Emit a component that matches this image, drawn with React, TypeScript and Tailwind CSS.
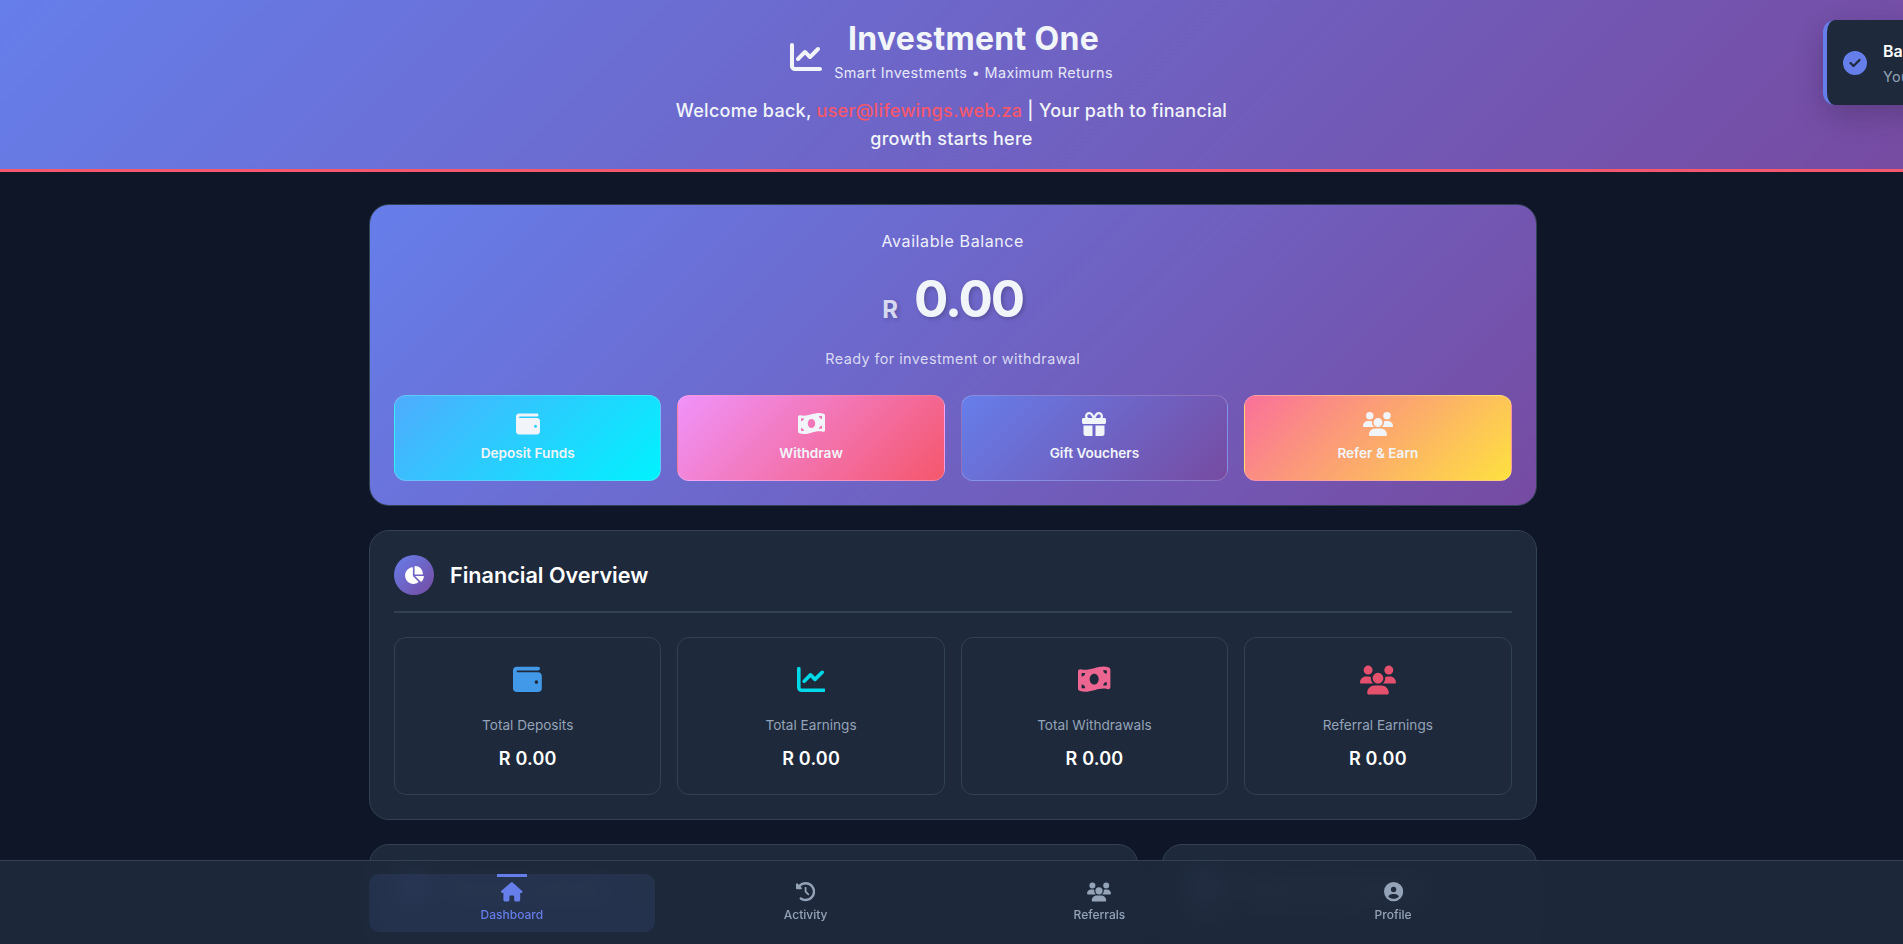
import React from "react";
import {
  FaChartLine,
  FaChartPie,
  FaCircleCheck,
  FaCircleUser,
  FaClockRotateLeft,
  FaGift,
  FaHouse,
  FaMoneyBillWave,
  FaUsers,
  FaWallet,
} from "react-icons/fa6";

const actions = [
  { label: "Deposit Funds", icon: <FaWallet className="text-[24px]" />, bg: "bg-[linear-gradient(135deg,#4facfe,#00f2fe)]" },
  { label: "Withdraw", icon: <FaMoneyBillWave className="text-[27px]" />, bg: "bg-[linear-gradient(135deg,#f093fb,#f5576c)]" },
  { label: "Gift Vouchers", icon: <FaGift className="text-[24px]" />, bg: "bg-[linear-gradient(135deg,#667eea,#764ba2)]" },
  { label: "Refer & Earn", icon: <FaUsers className="text-[30px]" />, bg: "bg-[linear-gradient(135deg,#fa709a,#fee140)]" },
];

const stats = [
  { label: "Total Deposits", icon: <FaWallet className="text-[28.8px] text-[#4299e8]" /> },
  { label: "Total Earnings", icon: <FaChartLine className="text-[28.8px] text-[#00d9e8]" /> },
  { label: "Total Withdrawals", icon: <FaMoneyBillWave className="text-[32.4px] text-[#ec6691]" /> },
  { label: "Referral Earnings", icon: <FaUsers className="text-[36px] text-[#e5506c]" /> },
];

const navItems = [
  { label: "Dashboard", icon: <FaHouse className="text-[21.6px]" />, active: true },
  { label: "Activity", icon: <FaClockRotateLeft className="text-[19.2px]" />, active: false },
  { label: "Referrals", icon: <FaUsers className="text-[24px]" />, active: false },
  { label: "Profile", icon: <FaCircleUser className="text-[19.2px]" />, active: false },
];

function SectionHeader({ title, icon }: { title: string; icon: React.ReactNode }) {
  return (
    <div className="flex items-center gap-4 border-b-2 border-[#334155] pb-4">
      <div className="flex h-10 w-10 items-center justify-center rounded-full bg-[linear-gradient(135deg,#667eea,#764ba2)] text-white">
        {icon}
      </div>
      <h2 className="text-[21.6px] font-semibold leading-[40px] text-white">{title}</h2>
    </div>
  );
}

export default function App() {
  return (
    <div className="relative h-[944px] overflow-hidden bg-[#0e1628] font-['Inter','Noto_Sans',sans-serif]">
      {/* Top header */}
      <header className="flex h-[172px] flex-col items-center border-b-[3px] border-[#f5576c] bg-[linear-gradient(135deg,#667eea,#764ba2)] pt-[16px] text-[#f1f5f9]">
        <div className="flex items-center gap-3">
          <FaChartLine className="mt-[14px] text-[32px]" />
          <div className="flex w-[279px] flex-col items-center">
            <h1 className="text-[32px] font-bold leading-[46px] tracking-[0.3px]">Investment One</h1>
            <p className="text-[14.4px] leading-[22px] tracking-[0.38px] text-[#e6e8f8]">
              Smart Investments • Maximum Returns
            </p>
          </div>
        </div>
        <p className="mt-[13px] w-[560px] text-center text-[18px] font-medium leading-[28px] tracking-[0.27px]">
          Welcome back, <span className="text-[#f5576c]">user@lifewings.web.za</span> | Your path to financial growth
          starts here
        </p>
      </header>

      {/* Main content */}
      <main className="ml-[369px] flex w-[1167.5px] flex-col gap-6 pt-[32px]">
        <section className="rounded-[20px] border border-[#334155] bg-[linear-gradient(135deg,#667eea,#764ba2)] p-6 text-center">
          <p className="text-[16px] leading-6 tracking-[0.6px] text-[#eef0fb]">Available Balance</p>
          <div className="mt-[8px] flex h-[76px] items-center justify-center gap-4 text-[#f1f5f9] [text-shadow:2px_2px_4px_rgba(0,0,0,0.2)]">
            <span className="mt-[21px] text-[24px] font-bold opacity-80">R</span>
            <span className="text-[51px] font-bold tracking-[-2px]">0.00</span>
          </div>
          <p className="mt-[10px] text-[14.4px] leading-[23px] tracking-[0.43px] text-[#d9d9f2]">
            Ready for investment or withdrawal
          </p>
          <div className="mt-[25px] grid grid-cols-4 gap-4">
            {actions.map((a) => (
              <button
                key={a.label}
                className={`flex h-[86px] flex-col items-center justify-center gap-[6px] rounded-xl border border-white/20 pb-[3px] text-[#f1f5f9] ${a.bg}`}
              >
                <div className="flex h-[26px] items-center justify-center">{a.icon}</div>
                <span className="text-[13.6px] font-semibold leading-5">{a.label}</span>
              </button>
            ))}
          </div>
        </section>

        <section className="rounded-[20px] border border-[#334155] bg-[#1e293b] p-6">
          <SectionHeader title="Financial Overview" icon={<FaChartPie className="text-[20px]" />} />
          <div className="mt-[24px] grid grid-cols-4 gap-4">
            {stats.map((s) => (
              <div key={s.label} className="flex h-[158px] flex-col items-center rounded-xl border border-[#334155] pt-[27px] text-center">
                <div className="flex h-[29px] items-center justify-center">{s.icon}</div>
                <p className="mt-[21px] text-[13.6px] leading-5 text-[#94a3b8]">{s.label}</p>
                <p className="mt-[12px] text-[18px] font-semibold leading-6 tracking-[0.2px] text-white">R 0.00</p>
              </div>
            ))}
          </div>
        </section>

        <div className="grid grid-cols-[769px_374.5px] gap-6">
          <section className="h-[300px] rounded-[20px] border border-[#334155] bg-[#1e293b] p-6">
            <SectionHeader title="Recent Activity" icon={<FaClockRotateLeft className="text-[19px]" />} />
          </section>
          <section className="h-[300px] rounded-[20px] border border-[#334155] bg-[#1e293b] p-6">
            <SectionHeader title="Referral Program" icon={<FaUsers className="text-[19px]" />} />
          </section>
        </div>
      </main>

      {/* Toast, sliding in past the right edge */}
      <div className="absolute left-[1823px] top-[20px] flex h-[85px] w-[340px] items-center gap-4 rounded-xl border-l-4 border-[#667eea] bg-[#1e293b] pl-4 shadow-[0_10px_30px_rgba(0,0,0,0.2)]">
        <FaCircleCheck className="shrink-0 text-[24px] text-[#667eea]" />
        <div>
          <p className="text-[16px] font-semibold leading-6 text-white">Balance Updated</p>
          <p className="mt-1 text-[14.4px] leading-5 tracking-[0.4px] text-[#94a3b8]">Your balance has been refreshed</p>
        </div>
      </div>

      {/* Bottom nav */}
      <nav className="absolute bottom-0 left-0 right-0 h-[84px] border-t border-[#334155] bg-[#1e293b]/95 backdrop-blur-md">
        <div className="ml-[369px] grid w-[1167px] grid-cols-4 gap-2 pt-[13px]">
          {navItems.map((n) => (
            <div
              key={n.label}
              className={`relative flex h-[58px] flex-col items-center rounded-[10px] pt-[8px] ${
                n.active ? "bg-[#667eea]/10 text-[#667eea]" : "text-[#94a3b8]"
              }`}
            >
              {n.active && <div className="absolute left-1/2 top-0 h-[3px] w-[30px] -translate-x-1/2 bg-[#667eea]" />}
              <div className="flex h-5 items-center justify-center">{n.icon}</div>
              <span className="mt-[4px] text-[12px] font-medium leading-[18px]">{n.label}</span>
            </div>
          ))}
        </div>
      </nav>
    </div>
  );
}
